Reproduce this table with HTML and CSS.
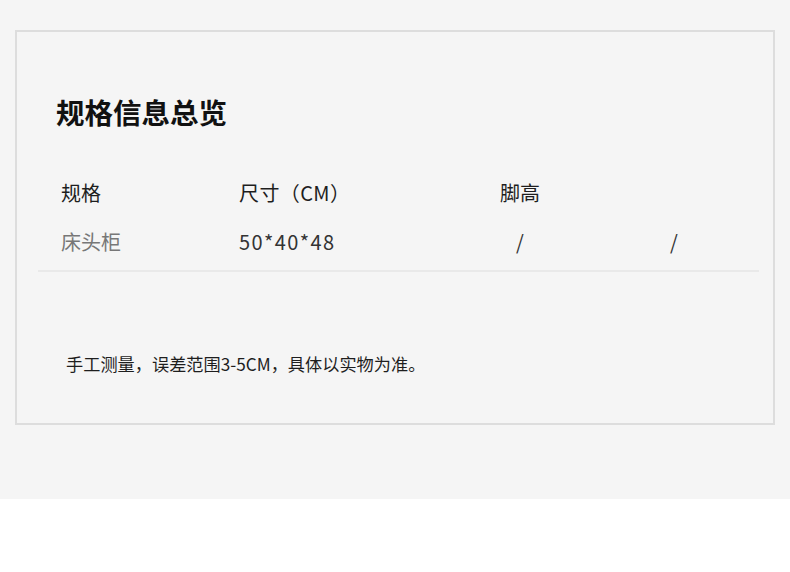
FILE: index.html
```html
<!DOCTYPE html>
<html lang="zh-CN">
<head>
  <meta charset="UTF-8" />
  <meta name="viewport" content="width=device-width, initial-scale=1.0"/>
  <title>规格信息总览</title>
  <link rel="stylesheet" href="styles.css">
</head>
<body>
  <div class="page">
    <div class="spec-box">
      <h2 class="title">规格信息总览</h2>

      <div class="spec-table">
        <div class="row head">
          <span>规格</span>
          <span class="wide">尺寸（CM）</span>
          <span class="mid">脚高</span>
          <span></span>
          <span></span>
        </div>
        <div class="row data">
          <span class="name">床头柜</span>
          <span class="num">50*40*48</span>
          <span class="mid">/</span>
          <span></span>
          <span class="mid">/</span>
        </div>
      </div>

      <p class="note">手工测量，误差范围3-5CM，具体以实物为准。</p>
    </div>
  </div>
</body>
</html>
```

FILE: styles.css
```css
body {
  margin: 0;
  font-family: "Noto Sans CJK SC", "Noto Sans", sans-serif;
  background-color: #fff;
  color: #222;
}

.page {
  background-color: #f5f5f5;
  height: 499px;
  box-sizing: border-box;
  padding: 30px 15px 0 15px;
}

.spec-box {
  border: 2px solid #dddddd;
  height: 395px;
  box-sizing: border-box;
  padding: 60px 14px 0 21px;
}

.title {
  margin: 0 0 36px 18px;
  font-size: 28.5px;
  line-height: 40px;
  font-weight: bold;
  color: #111;
}

.spec-table {
  border-bottom: 2px solid #e9e9e9;
  padding-bottom: 4px;
}

.row {
  display: grid;
  grid-template-columns: 178px 259px 44px 110px 44px;
  padding-left: 23px;
  font-size: 20px;
  line-height: 49px;
}

.row .mid {
  text-align: center;
}

.row .wide {
  letter-spacing: 0.4px;
}

.row .num {
  letter-spacing: 1.4px;
}

.head {
  color: #1e1e1e;
}

.data {
  color: #333;
}

.data .name {
  color: #777;
}

.note {
  margin: 80px 0 0 28px;
  font-size: 17.2px;
  line-height: 24px;
  color: #1e1e1e;
}
```
